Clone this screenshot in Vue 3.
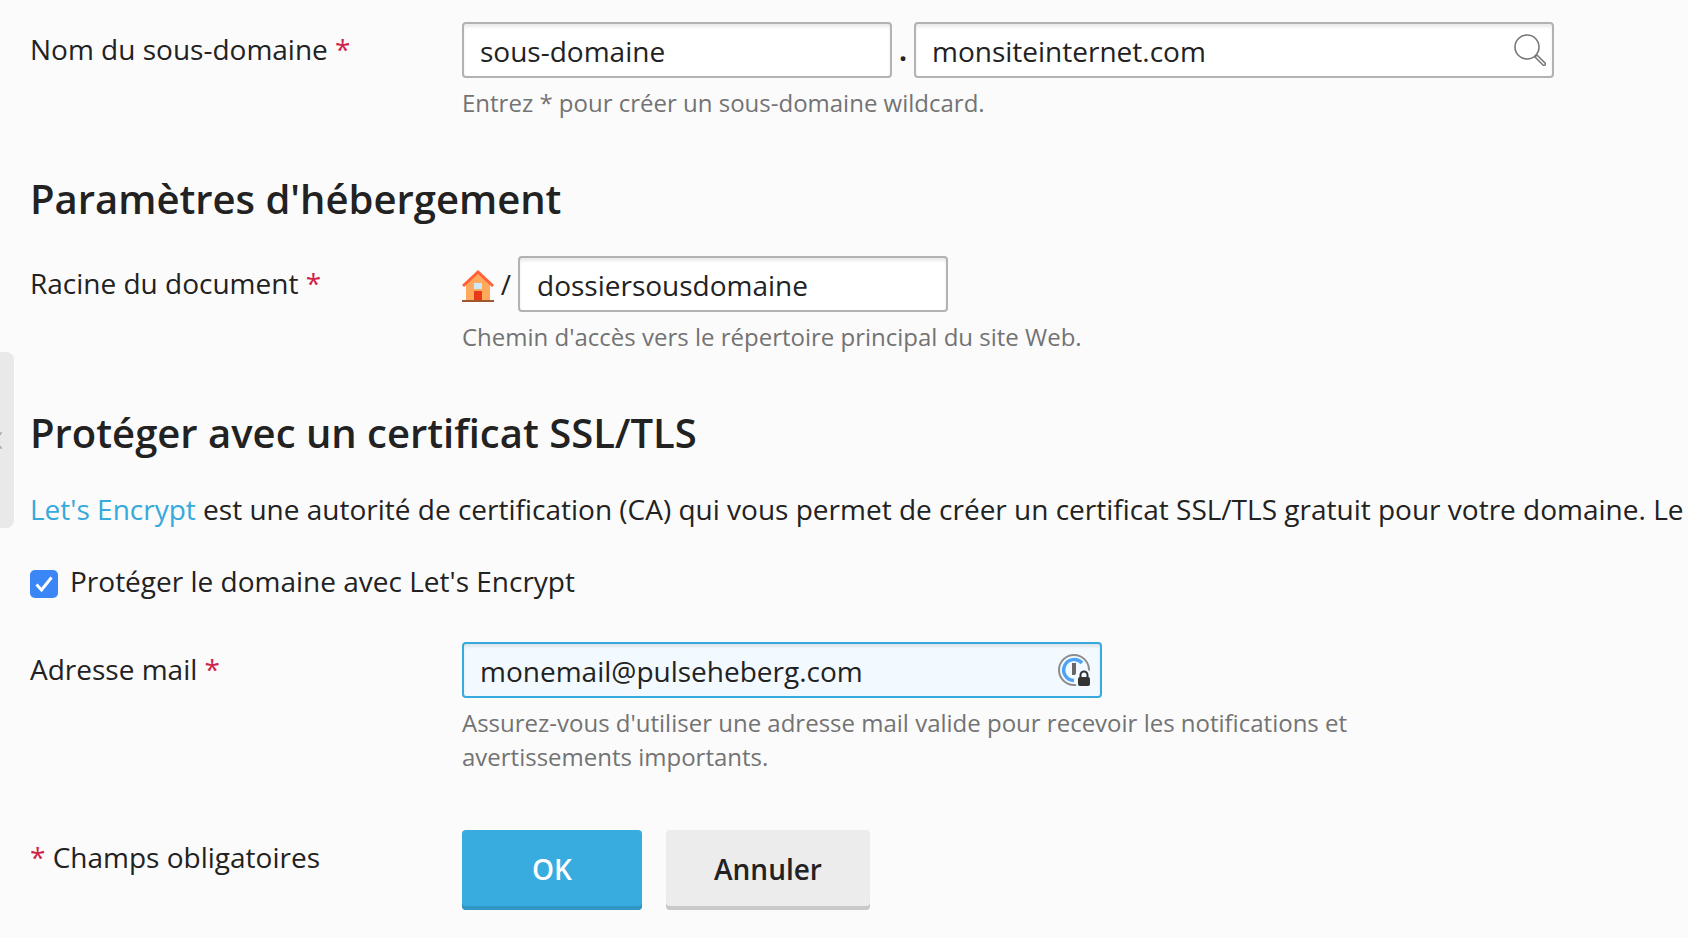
<script setup>
const star = '*'
</script>

<template>
  <div class="page">
    <div class="side-handle">
      <svg class="chev" width="2" height="17" viewBox="0 0 2 17" fill="none">
        <path d="M1.500 0 0 3M0 14l1.500 3" stroke="#adadad" stroke-width="1.500" />
      </svg>
    </div>

    <div class="row first">
      <div class="label">Nom du sous-domaine <span class="req">{{ star }}</span></div>
      <div class="field">
        <div class="inline">
          <div class="input sub">sous-domaine</div>
          <span class="dot">.</span>
          <div class="input domain">
            <span>monsiteinternet.com</span>
            <svg class="search" width="32" height="32" viewBox="0 0 32 32" fill="none">
              <circle cx="13" cy="13" r="12" stroke="#777" stroke-width="1.600" />
              <path d="M21 23l2-2 8 8a1.400 1.400 0 0 1-2 2z" stroke="#777" stroke-width="1.600" fill="#fff" stroke-linejoin="round" />
            </svg>
          </div>
        </div>
        <div class="hint">Entrez * pour créer un sous-domaine wildcard.</div>
      </div>
    </div>

    <h2 class="heading h-host">Paramètres d'hébergement</h2>

    <div class="row">
      <div class="label">Racine du document <span class="req">{{ star }}</span></div>
      <div class="field">
        <div class="inline">
          <svg class="home" width="32" height="32" viewBox="0 0 32 32">
            <path d="M4 13 16 3l12 10v17H4z" fill="#ffa95c" />
            <path d="M0 15 16 0l16 15-2 2L16 4 2 17z" fill="#ff6136" />
            <rect x="12" y="13" width="8" height="6" fill="#cfe8f5" />
            <rect x="12" y="21" width="8" height="9" fill="#e8391a" />
            <rect x="0" y="30" width="32" height="2" fill="#a0572d" />
          </svg>
          <span class="slash">/</span>
          <div class="input root">dossiersousdomaine</div>
        </div>
        <div class="hint">Chemin d'accès vers le répertoire principal du site Web.</div>
      </div>
    </div>

    <h2 class="heading h-ssl">Protéger avec un certificat SSL/TLS</h2>

    <p class="para"><span class="link">Let's Encrypt</span> est une autorité de certification (CA) qui vous permet de créer un certificat SSL/TLS gratuit pour votre domaine. Le</p>

    <div class="check-row">
      <span class="check">
        <svg width="20" height="18" viewBox="0 0 20 18" fill="none">
          <path d="M2.500 9.500 7.500 15 17.500 2.500" stroke="#fff" stroke-width="3" />
        </svg>
      </span>
      <span>Protéger le domaine avec Let's Encrypt</span>
    </div>

    <div class="row mail">
      <div class="label">Adresse mail <span class="req">{{ star }}</span></div>
      <div class="field">
        <div class="input email">
          <span>monemail@pulseheberg.com</span>
          <svg class="pw" width="32" height="32" viewBox="0 0 32 32" fill="none">
            <circle cx="16" cy="16" r="15" stroke="#8c8c8c" stroke-width="2" />
            <path d="M24 9A10.500 10.500 0 1 0 16 26.500" stroke="#4ea3f5" stroke-width="3.500" />
            <rect x="14" y="9" width="4" height="12" fill="#666" />
            <circle cx="26" cy="25" r="10" fill="#f2f9ff" />
            <path d="M22.500 24v-3a3.500 3.500 0 0 1 7 0v3" stroke="#333" stroke-width="2" />
            <rect x="20" y="23" width="12" height="9" rx="2" fill="#333" />
          </svg>
        </div>
        <div class="hint wrap">Assurez-vous d'utiliser une adresse mail valide pour recevoir les notifications et avertissements importants.</div>
      </div>
    </div>

    <div class="row actions">
      <div class="label"><span class="req">{{ star }}</span> Champs obligatoires</div>
      <div class="buttons">
        <button class="btn ok">OK</button>
        <button class="btn cancel">Annuler</button>
      </div>
    </div>
  </div>
</template>

<style>
html, body { margin: 0; background: #fbfbfb; }
</style>

<style scoped>
.page {
  position: relative;
  width: 1688px;
  height: 938px;
  overflow: hidden;
  box-sizing: border-box;
  padding: 22px 0 0 30px;
  background: #fbfbfb;
  color: #222;
  font-family: "Open Sans", "Noto Sans", sans-serif;
  font-size: 28px;
  line-height: 40px;
}
.side-handle {
  position: absolute;
  left: 0;
  top: 352px;
  width: 14px;
  height: 176px;
  background: #e9e9e9;
  border-radius: 0 8px 8px 0;
}
.chev {
  position: absolute;
  left: 0;
  top: 80px;
}
.row { display: flex; }
.label { width: 432px; flex: none; padding-top: 7px; }
.req { color: #d0234a; }
.field { flex: none; }
.inline { display: flex; align-items: center; height: 56px; }
.input {
  box-sizing: border-box;
  height: 56px;
  border: 2px solid #b2b2b2;
  border-radius: 4px;
  background: #fff;
  box-shadow: inset 0 3px 3px rgba(0, 0, 0, 0.08);
  padding: 7px 16px 0;
  display: flex;
  justify-content: space-between;
  color: #222;
}
.sub { width: 430px; }
.dot { width: 22px; text-align: center; font-weight: 700; }
.domain { width: 640px; padding-right: 6px; }
.search { margin-top: 3px; }
.hint {
  margin-top: 8px;
  color: #737373;
  font-size: 24px;
  line-height: 34px;
}
.wrap { width: 900px; }
.heading {
  margin: 0;
  font-size: 40px;
  line-height: 56px;
  font-weight: 600;
  color: #222;
}
.h-host { margin-top: 51px; }
.h-host + .row { margin-top: 29px; }
.home { margin-top: 4px; flex: none; }
.slash { width: 24px; text-align: center; }
.root { width: 430px; padding-left: 17px; }
.h-ssl { margin-top: 51px; }
.para { margin: 28px 0 0; white-space: nowrap; }
.link { color: #36a9dd; }
.check-row { display: flex; align-items: center; gap: 12px; margin-top: 32px; }
.check {
  width: 28px;
  height: 28px;
  margin-top: 6px;
  border-radius: 5px;
  background: #3b86f7;
  display: flex;
  align-items: center;
  justify-content: center;
}
.mail { margin-top: 41px; }
.email {
  width: 640px;
  border-color: #36a9dd;
  background: #f2f9ff;
  padding-right: 10px;
}
.pw { margin-top: 3px; }
.actions { margin-top: 56px; }
.buttons { display: flex; gap: 24px; }
.btn {
  box-sizing: border-box;
  height: 80px;
  border: 0;
  border-radius: 4px;
  font-family: inherit;
  font-size: 28px;
  font-weight: 600;
  padding: 0 0 2px;
}
.ok {
  width: 180px;
  color: #fff;
  background: #38abdf;
  box-shadow: inset 0 -4px 0 #3196c4;
}
.cancel {
  width: 204px;
  color: #222;
  background: #ececec;
  box-shadow: inset 0 -4px 0 #c9c9c9;
}
</style>
